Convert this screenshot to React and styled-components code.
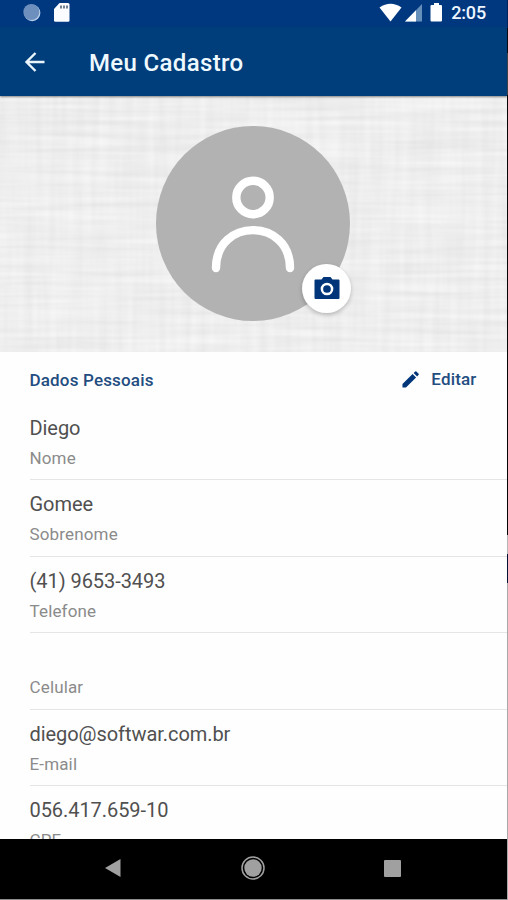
import React from "react";
import styled, { createGlobalStyle } from "styled-components";

const Global = createGlobalStyle`
  *, *::before, *::after { box-sizing: border-box; }
  body { margin: 0; background: #000; font-family: Roboto, "Liberation Sans", sans-serif; }
  svg { display: block; flex: none; }
`;

const Screen = styled.div`
  width: 508px;
  height: 900px;
  display: grid;
  grid-template-columns: 506.5px 1.5px;
  overflow: hidden;
`;

const Phone = styled.main`
  height: 900px;
  display: flex;
  flex-direction: column;
  background: #fefefe;
  border-bottom: 1px solid #8e8e8e;
  overflow: hidden;
`;

const Edge = styled.div`
  background: linear-gradient(
    #00235c 0 28px, #080b12 28px 53px, #3c4148 53px 95px, #050505 95px 535px,
    #b5b5b5 535px 554px, #001335 554px 583px, #a9a9a9 583px
  );
`;

const StatusBar = styled.div`
  height: 27px;
  flex: none;
  display: flex;
  justify-content: space-between;
  padding: 0 20.5px 0 23px;
  background: #003880;
`;

const StatusGroup = styled.div`
  display: flex;
  align-items: flex-start;
  padding-top: 3px;
  gap: ${(p) => p.$gap};
`;

const Clock = styled.time`
  margin-left: 4px;
  font-size: 18px;
  line-height: 20px;
  font-weight: 500;
  letter-spacing: -0.15px;
  color: #eef6ff;
`;

const AppBar = styled.header`
  height: 69px;
  flex: none;
  display: flex;
  align-items: center;
  gap: 43px;
  padding: 0 24px;
  background: #003d7b;
  box-shadow: 0 1px 2px rgba(0, 0, 0, 0.45);
  z-index: 1;
`;

const IconButton = styled.button`
  display: flex;
  padding: 0;
  border: 0;
  background: none;
  color: #e9f5fb;
`;

const Title = styled.h1`
  margin: 0;
  padding-top: 3px;
  font-size: 24px;
  line-height: 30px;
  font-weight: 500;
  letter-spacing: 0.35px;
  color: #eef9ff;
`;

const Hero = styled.section`
  height: 256px;
  flex: none;
  display: grid;
  justify-items: center;
  padding: 30px 0.5px 0 0;
  position: relative;
  background: #eeeeee;
`;

const Linen = styled.svg`
  position: absolute;
  inset: 0;
`;

const Avatar = styled.div`
  width: 194px;
  height: 195px;
  display: flex;
  justify-content: center;
  padding-top: 50px;
  border-radius: 50%;
  background: #b2b2b2;
  position: relative;
`;

const CameraButton = styled.button`
  position: absolute;
  right: -1px;
  bottom: 8px;
  width: 49px;
  height: 49px;
  display: grid;
  place-items: center;
  padding: 0 0 2px;
  border: 0;
  border-radius: 50%;
  background: #fff;
  color: #003579;
  box-shadow: 0 2px 4px rgba(0, 0, 0, 0.22);
`;

const Details = styled.section`
  flex: 1;
  min-height: 0;
  overflow: hidden;
  padding-left: 29.5px;
`;

const SectionHeader = styled.div`
  height: 52px;
  display: flex;
  justify-content: space-between;
  padding: 17px 30px 0 0;
  font-size: 17px;
  line-height: 22px;
  font-weight: 500;
  letter-spacing: 0.17px;
  color: #234d80;
`;

const SectionTitle = styled.h2`
  margin: 0;
  font: inherit;
`;

const EditButton = styled.button`
  display: flex;
  align-items: center;
  gap: 12px;
  height: 20px;
  padding: 0;
  border: 0;
  background: none;
  color: inherit;
  font: inherit;
  letter-spacing: inherit;
`;

const Field = styled.div`
  height: 76.4px;
  padding-top: 11px;
  border-bottom: 1px solid #e5e5e5;
`;

const Value = styled.div`
  height: 26px;
  font-size: 20px;
  line-height: 26px;
  letter-spacing: -0.06px;
  color: #505050;
`;

const Label = styled.div`
  padding-top: 6px;
  font-size: 17px;
  line-height: 22px;
  letter-spacing: 0.15px;
  color: #8b8b8b;
`;

const NavBar = styled.nav`
  height: 60px;
  flex: none;
  display: grid;
  grid-template-columns: 140px 140px 140px;
  justify-content: center;
  place-items: center;
  padding: 0 1px 2px 0;
  background: #000;
  color: #a0a0a0;
`;

const fields = [
  ["Diego", "Nome"],
  ["Gomee", "Sobrenome"],
  ["(41) 9653-3493", "Telefone"],
  ["", "Celular"],
  ["diego@softwar.com.br", "E-mail"],
  ["056.417.659-10", "CPF"],
];

function LinenTexture() {
  return (
    <Linen width="506.5" height="256" aria-hidden="true">
      <filter id="weft" x="0" y="0" width="100%" height="100%" colorInterpolationFilters="sRGB">
        <feTurbulence type="fractalNoise" baseFrequency="0.008 0.16" numOctaves="2" seed="4" />
        <feColorMatrix values="0.13 0 0 0 0.87  0.13 0 0 0 0.87  0.13 0 0 0 0.87  0 0 0 0 1" />
      </filter>
      <filter id="warp" x="0" y="0" width="100%" height="100%" colorInterpolationFilters="sRGB">
        <feTurbulence type="fractalNoise" baseFrequency="0.12 0.009" numOctaves="2" seed="9" />
        <feColorMatrix values="0.11 0 0 0 0.88  0.11 0 0 0 0.88  0.11 0 0 0 0.88  0 0 0 0 1" />
      </filter>
      <rect width="507" height="256" filter="url(#weft)" />
      <rect width="507" height="256" filter="url(#warp)" opacity="0.4" />
    </Linen>
  );
}

export default function App() {
  return (
    <>
      <Global />
      <Screen>
        <Phone>
          <StatusBar>
            <StatusGroup $gap="12px">
              <svg width="18" height="19" viewBox="0 0 18 19">
                <circle cx="9.2" cy="10" r="8.2" fill="#b8cfea" />
                <circle cx="8.3" cy="9" r="8" fill="#6d8fbd" />
              </svg>
              <svg width="17" height="19" viewBox="0 0 17 19">
                <path d="M6.5 0H15q1.5 0 1.5 1.5v16q0 1.3-1.5 1.3H2.5Q1 18.8 1 17.5V6z" fill="#fafcff" />
                <path d="M8 2.5v3M11 2.5v3M14 2.5v3" stroke="#596b80" strokeWidth="1.7" />
              </svg>
            </StatusGroup>
            <StatusGroup $gap="3px">
              <svg width="23" height="19" viewBox="0 0 23 19">
                <path d="M.5 4.5Q11.5-3 22.5 4.5L11.5 18.5z" fill="#fff" />
              </svg>
              <svg width="17" height="19" viewBox="0 0 17 19">
                <path d="M0 18.5 17 1v17.5z" fill="#668fba" />
                <path d="M0 18.5 11 7.2v11.3z" fill="#fff" />
              </svg>
              <svg width="19" height="19" viewBox="0 0 19 19">
                <path d="M9 0h5v2h2q1 0 1 1v14.5q0 1-1 1H6.5q-1 0-1-1V3q0-1 1-1H9z" fill="#fff" />
              </svg>
              <Clock>2:05</Clock>
            </StatusGroup>
          </StatusBar>

          <AppBar>
            <IconButton aria-label="Voltar">
              <svg width="22" height="22" viewBox="0 0 22 22" fill="none" stroke="currentColor" strokeWidth="2.4">
                <path d="M20.5 11H2.5M11.5 2 2.5 11l9 9" />
              </svg>
            </IconButton>
            <Title>Meu Cadastro</Title>
          </AppBar>

          <Hero>
            <LinenTexture />
            <Avatar>
              <svg width="84" height="97" viewBox="0 0 84 97" fill="none" stroke="#fff" strokeWidth="8.4">
                <circle cx="42" cy="21.5" r="16.7" />
                <path d="M5 92C5 41.5 79 41.5 79 92" strokeLinecap="round" />
              </svg>
              <CameraButton aria-label="Alterar foto">
                <svg width="26" height="24" viewBox="0 0 26 24">
                  <path d="M1.5 3.5h6L9.5 1h7l2 2.5h6q1 0 1 1V22q0 1-1 1h-23q-1 0-1-1V4.5q0-1 1-1z" fill="currentColor" />
                  <circle cx="13" cy="13" r="5.1" fill="none" stroke="#fff" strokeWidth="2.5" />
                </svg>
              </CameraButton>
            </Avatar>
          </Hero>

          <Details>
            <SectionHeader>
              <SectionTitle>Dados Pessoais</SectionTitle>
              <EditButton>
                <svg width="17" height="17" viewBox="0 0 18 18" fill="#003579">
                  <path d="M.5 17.5v-3.7L11.2 3.1l3.7 3.7L4.2 17.5zM12.3 2 14 .4q.6-.5 1.2 0l2.4 2.4q.5.6 0 1.2L16 5.7z" />
                </svg>
                Editar
              </EditButton>
            </SectionHeader>
            {fields.map(([value, label]) => (
              <Field key={label}>
                <Value>{value}</Value>
                <Label>{label}</Label>
              </Field>
            ))}
          </Details>

          <NavBar>
            <svg width="16" height="18" viewBox="0 0 16 18" fill="currentColor">
              <path d="M0 9 15.5 0v18z" />
            </svg>
            <svg width="24" height="24" viewBox="0 0 24 24" fill="currentColor">
              <circle cx="12" cy="12" r="8.7" />
              <circle cx="12" cy="12" r="11" fill="none" stroke="currentColor" strokeWidth="1.5" />
            </svg>
            <svg width="17" height="17" viewBox="0 0 17 17" fill="currentColor">
              <rect width="17" height="17" rx="1" />
            </svg>
          </NavBar>
        </Phone>
        <Edge />
      </Screen>
    </>
  );
}
